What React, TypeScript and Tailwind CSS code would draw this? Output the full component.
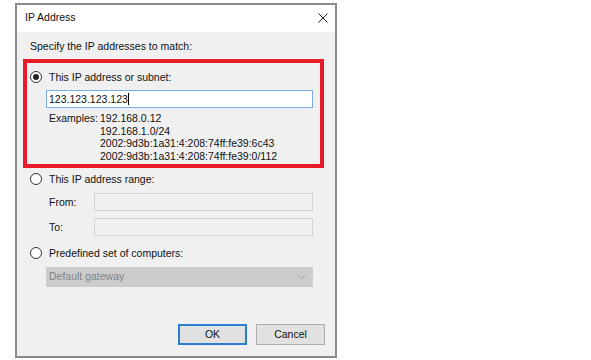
import React from "react";

const font = { fontFamily: '"Liberation Sans", Arial, sans-serif' };

function Radio({ checked }: { checked?: boolean }) {
  return (
    <span className="w-[12px] h-[12px] shrink-0 rounded-full border border-[#333] bg-white flex items-center justify-center">
      {checked && <span className="w-[6px] h-[6px] rounded-full bg-[#222]" />}
    </span>
  );
}

const examples = [
  "192.168.0.12",
  "192.168.1.0/24",
  "2002:9d3b:1a31:4:208:74ff:fe39:6c43",
  "2002:9d3b:1a31:4:208:74ff:fe39:0/112",
];

export default function App() {
  return (
    <div className="w-[591px] h-[360px] bg-white overflow-hidden text-[10.5px] text-[#111]" style={font}>
      <div className="ml-[15px] mt-[3px] w-[322px] h-[355px] border-2 border-[#8a8a8a] flex flex-col">
        {/* title bar */}
        <div className="h-[27px] bg-white flex items-center justify-between pl-[8px] pr-[7px] pb-[2px]">
          <span className="text-[10.5px]">IP Address</span>
          <svg width="10" height="10" viewBox="0 0 10 10">
            <path d="M0.5 0.5 L9.5 9.5 M9.5 0.5 L0.5 9.5" stroke="#222" strokeWidth="1" />
          </svg>
        </div>

        <div className="flex-1 bg-[#f0f0f0] flex flex-col">
          <div className="pl-[13px] pt-[8px] leading-[12px]">Specify the IP addresses to match:</div>

          {/* highlighted group */}
          <div className="ml-[6px] mt-[7px] w-[301px] h-[109px] border-4 border-[#e81b2a] flex flex-col">
            <div className="flex items-center pl-[3px] pt-[8px] gap-[7px] leading-[12px]">
              <Radio checked />
              <span>This IP address or subnet:</span>
            </div>
            <div className="ml-[19px] mt-[7px] w-[267px] h-[18px] bg-white border border-[#7aaee2] flex items-center pl-[2px] leading-[12px]">
              <span>123.123.123.123</span>
              <span className="w-px h-[12px] bg-black" />
            </div>
            <div className="flex ml-[22px] mt-[4px] leading-[12.5px]">
              <span className="w-[51px]">Examples:</span>
              <div className="flex flex-col">
                {examples.map((e) => (
                  <span key={e}>{e}</span>
                ))}
              </div>
            </div>
          </div>

          <div className="flex items-center pl-[13px] mt-[5px] gap-[7px] leading-[12px]">
            <Radio />
            <span>This IP address range:</span>
          </div>
          <div className="flex items-center ml-[32px] mt-[8px] leading-[12px]">
            <span className="w-[45px]">From:</span>
            <div className="w-[219px] h-[18px] bg-[#f0f0f0] border border-[#d4d4d4]" />
          </div>
          <div className="flex items-center ml-[32px] mt-[7px] leading-[12px]">
            <span className="w-[45px]">To:</span>
            <div className="w-[219px] h-[18px] bg-[#f0f0f0] border border-[#d4d4d4]" />
          </div>

          <div className="flex items-center pl-[13px] mt-[11px] gap-[7px] leading-[12px]">
            <Radio />
            <span>Predefined set of computers:</span>
          </div>
          <div className="ml-[29px] mt-[8px] w-[267px] h-[20px] bg-[#cccccc] flex items-center justify-between pl-[3px] pr-[7px] text-[#838383]">
            <span>Default gateway</span>
            <svg width="9" height="6" viewBox="0 0 9 6">
              <path d="M0.5 0.5 L4.5 4.5 L8.5 0.5" fill="none" stroke="#a8a8a8" strokeWidth="1" />
            </svg>
          </div>

          <div className="mt-auto flex justify-end gap-[9px] pr-[10px] pb-[11px]">
            <button className="w-[69px] h-[21px] bg-[#e1e1e1] border-2 border-[#2a7fd4] flex items-center justify-center">
              OK
            </button>
            <button className="w-[69px] h-[21px] bg-[#e1e1e1] border border-[#adadad] flex items-center justify-center">
              Cancel
            </button>
          </div>
        </div>
      </div>
    </div>
  );
}
